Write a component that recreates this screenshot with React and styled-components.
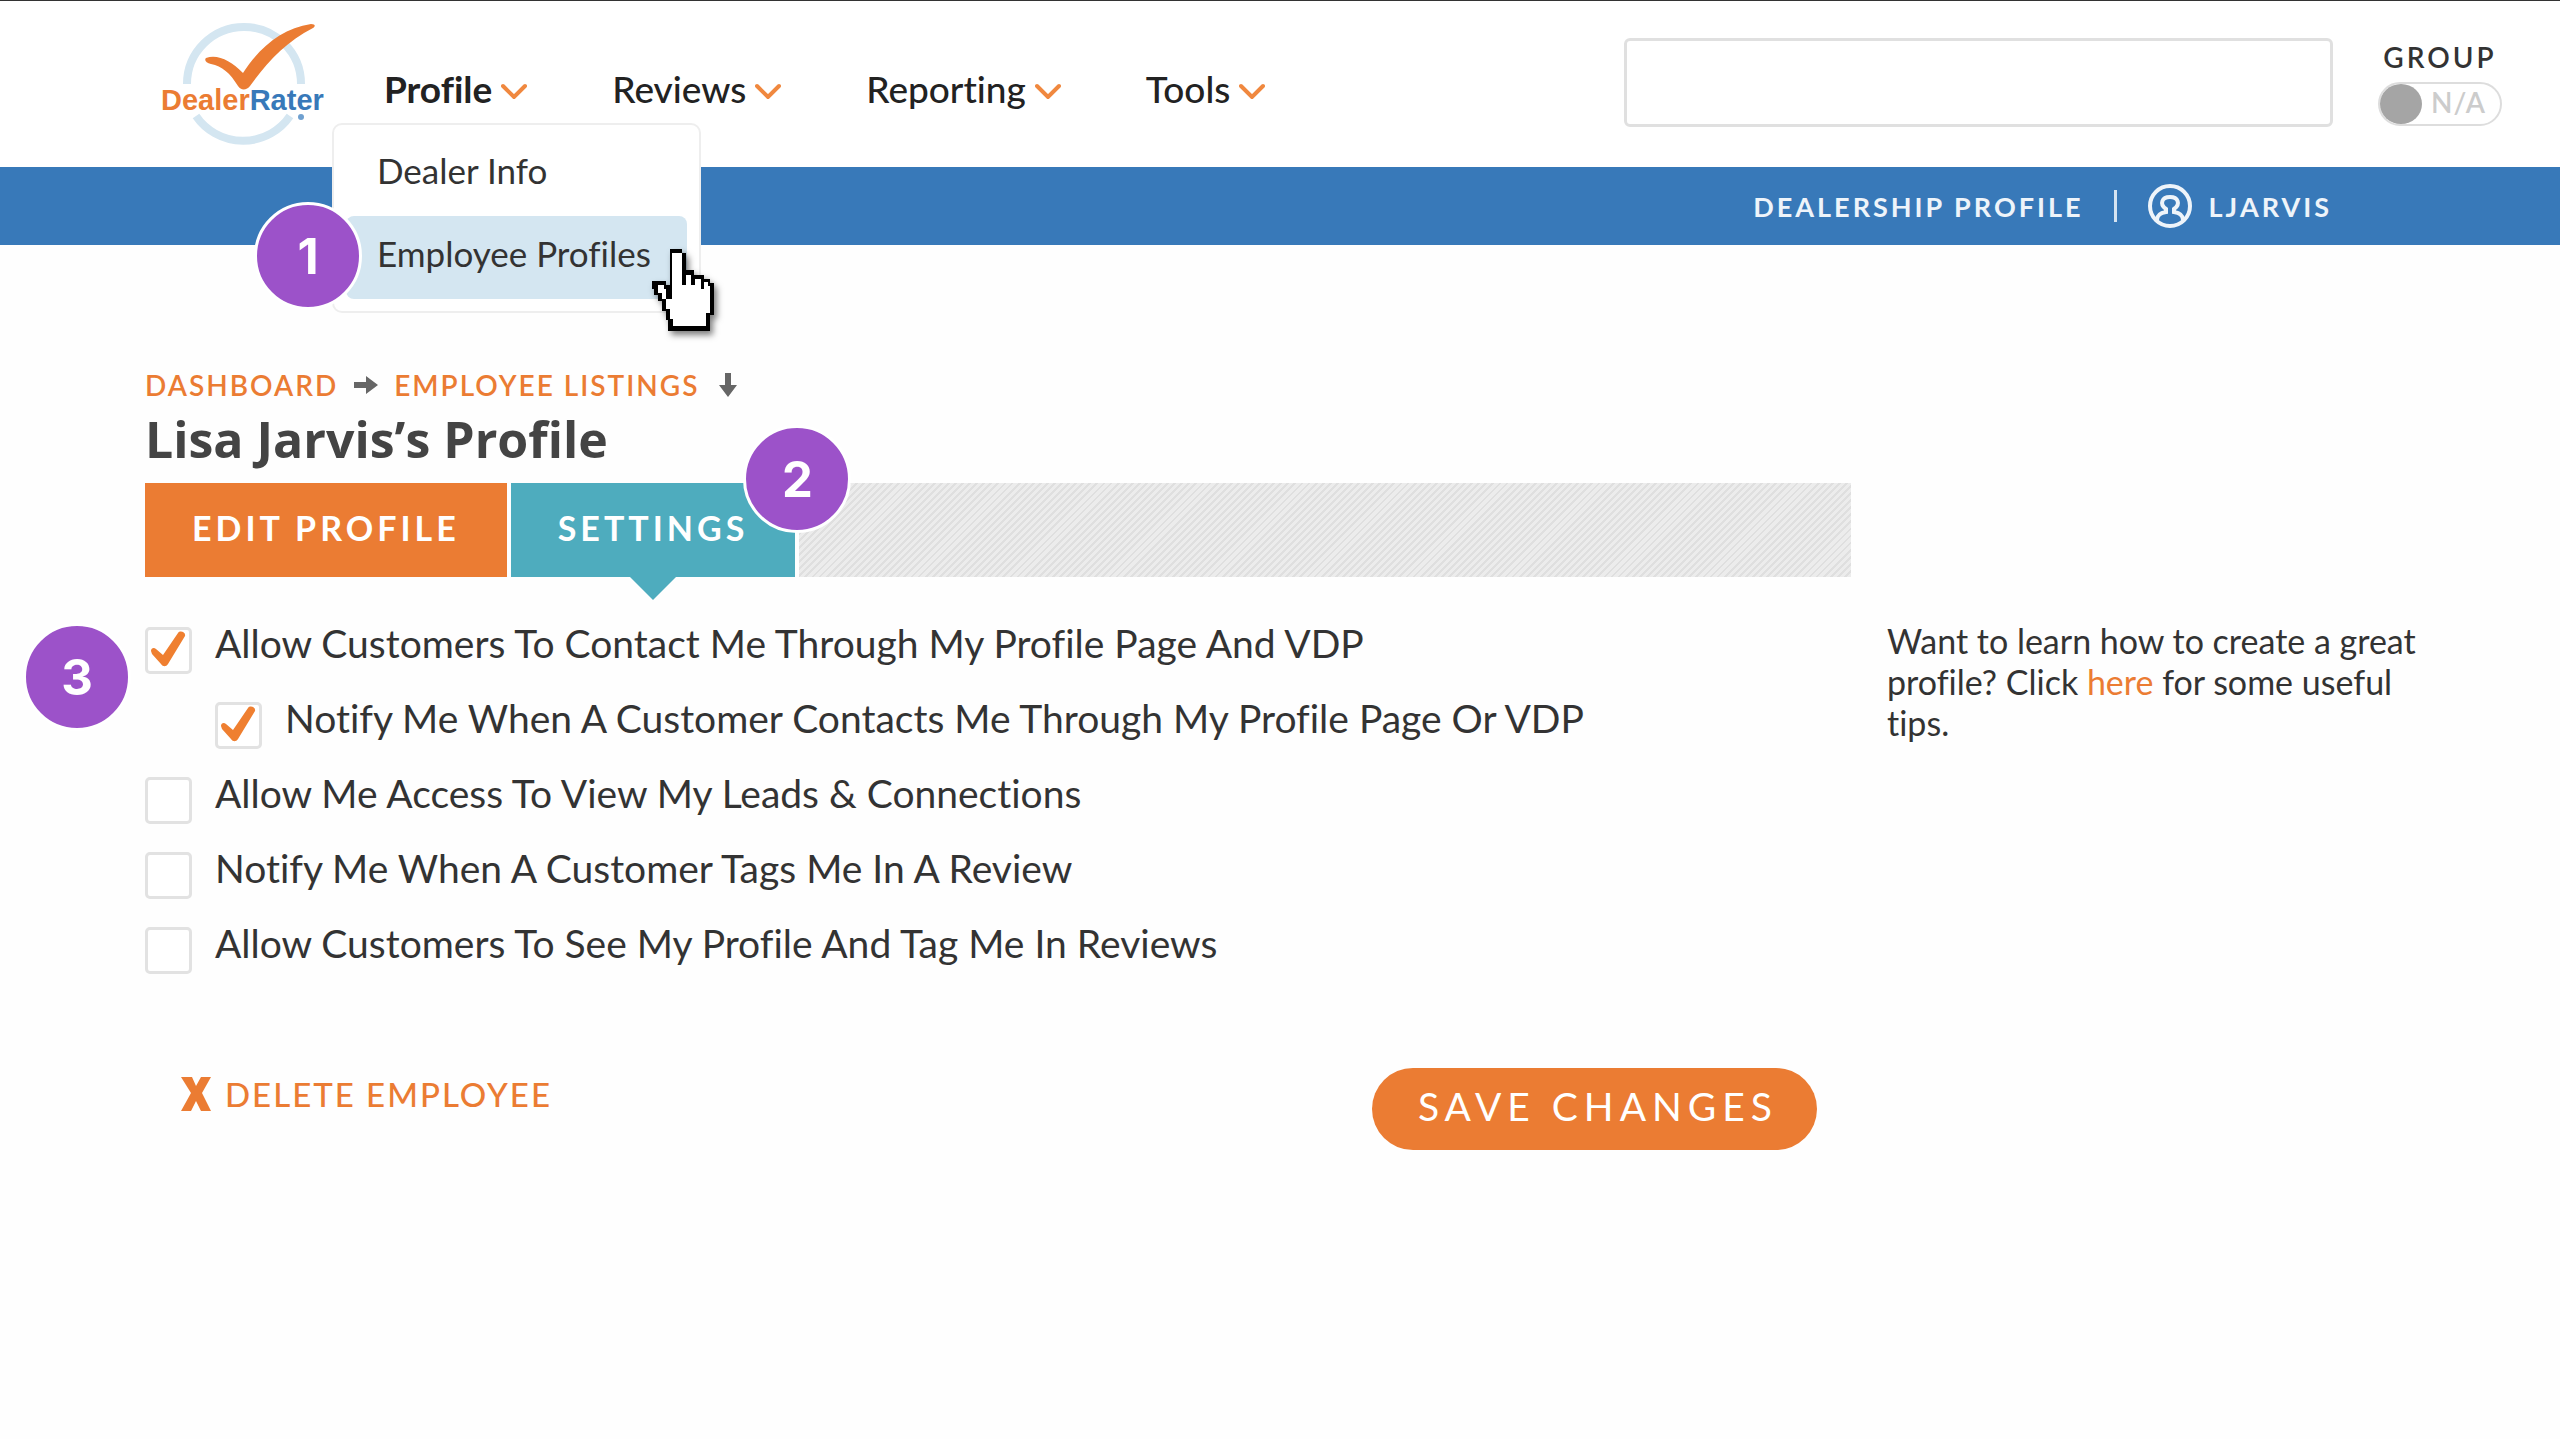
import React, { useState } from "react";
import styled, { createGlobalStyle } from "styled-components";

const GlobalStyle = createGlobalStyle`
  * {
    box-sizing: border-box;
  }

  body {
    margin: 0;
    background: #fefefe;
    color: #333;
    font-family: Lato, "Open Sans", sans-serif;
    font-variant-ligatures: none;
  }

  a {
    color: #eb7c33;
    text-decoration: none;
  }

  button, input {
    font: inherit;
  }
`;

const navItems = ["Profile", "Reviews", "Reporting", "Tools"];

const initialSettings = [
  { id: "contact", label: "Allow Customers To Contact Me Through My Profile Page And VDP", checked: true },
  { id: "notify-contact", label: "Notify Me When A Customer Contacts Me Through My Profile Page Or VDP", checked: true, nested: true },
  { id: "leads", label: "Allow Me Access To View My Leads & Connections", checked: false },
  { id: "notify-tag", label: "Notify Me When A Customer Tags Me In A Review", checked: false },
  { id: "visible", label: "Allow Customers To See My Profile And Tag Me In Reviews", checked: false },
];

const Logo = () => (
  <LogoLink href="#home" aria-label="DealerRater home">
    <svg width="166" height="126" viewBox="0 0 166 126">
      <g fill="none" stroke="#d4e6f1" strokeWidth="8">
        <path d="M27 62 A57 57 0 1 1 141 62" />
        <path d="M36 94 A57 57 0 0 0 130 94" />
      </g>
      <path
        fill="#eb7c33"
        d="M46 36 C58 32 71 39 83 51 C99 26 122 6 151 2 C155 2 156 4 153 6 C126 20 108 39 90 64 C87 68 81 69 78 64 C70 51 62 44 51 42 C46 41 44 38 46 36 Z"
      />
      <text x="1" y="88" fontFamily="Liberation Sans, Arial, sans-serif" fontWeight="700" fontSize="29">
        <tspan fill="#eb7c33">Dealer</tspan>
        <tspan fill="#3879b9">Rater</tspan>
      </text>
      <circle cx="141" cy="95" r="3" fill="#6fa0d0" />
    </svg>
  </LogoLink>
);

const Chevron = () => (
  <svg width="26" height="20" viewBox="0 0 26 20" fill="none" stroke="#f0883f" strokeWidth="4" aria-hidden="true">
    <path d="M2 7 L13 18 L24 7" strokeLinecap="round" />
  </svg>
);

const UserIcon = () => (
  <svg width="46" height="46" viewBox="0 0 46 46" fill="none" stroke="#eef4fa" aria-hidden="true">
    <circle cx="23" cy="23" r="20" strokeWidth="4" />
    <path
      d="M10 37 C10 32 13 30 19 29 V26 C12 21 15 14 23 14 C31 14 34 21 27 26 V29 C33 30 36 32 36 37"
      strokeWidth="4"
    />
  </svg>
);

const Arrow = ({ down }) => (
  <svg width="24" height="24" viewBox="0 0 24 24" aria-hidden="true">
    <path fill="#666" transform={down ? "rotate(90 12 12)" : undefined} d="M0 9 H12 V3 L24 12 L12 21 V15 H0 Z" />
  </svg>
);

const CheckMark = () => (
  <svg width="36" height="36" viewBox="0 0 36 36" aria-hidden="true">
    <path fill="#ef7f30" d="M1 20 C1 17 4 16 6 18 L13 24 L28 2 C30 -1 36 1 35 5 L18 33 C16 36 13 36 11 33 L2 23 Z" />
  </svg>
);

const HandCursor = () => (
  <Pointer width="64" height="86" viewBox="0 0 64 86" aria-hidden="true">
    <path
      fill="#000"
      d="M20 2 H32 V6 H36 V23 H44 V28 H54 V32 H60 V36 H64 V68 H60 V84 H18 V73 H16 V64 H12 V54 H8 V48 H4 V42 H2 V34 H16 V38 H20 Z"
    />
    <path
      fill="#fff"
      d="M22 6 H32 V38 H36 V28 H41 V38 H45 V32 H51 V42 H54 V35 H58 V39 H60 V66 H56 V79 H23 V72 H20 V62 H16 V52 H12 V46 H8 V38 H14 V42 H18 V52 H22 Z"
    />
    <path fill="#000" d="M16 38 H20 V52 H16 Z" />
  </Pointer>
);

const App = () => {
  const [settings, setSettings] = useState(initialSettings);

  const handleToggle = (id) => {
    setSettings(settings.map((item) => (
      item.id === id ? { ...item, checked: !item.checked } : item
    )));
  };

  return (
    <>
      <GlobalStyle />
      <Header>
        <Logo />
        <Nav>
          {navItems.map((item, index) => (
            <NavItem key={item}>
              <NavButton type="button" $active={index === 0}>
                {item}
                <Chevron />
              </NavButton>
              {index === 0 && (
                <Menu>
                  <MenuLink href="#dealer-info">Dealer Info</MenuLink>
                  <MenuLink href="#employee-profiles" $active>Employee Profiles</MenuLink>
                  <MenuStep>1</MenuStep>
                  <HandCursor />
                </Menu>
              )}
            </NavItem>
          ))}
        </Nav>
        <Search type="search" aria-label="Search" />
        <Group>
          <label htmlFor="group">GROUP</label>
          <Switch>
            <SwitchInput type="checkbox" id="group" />
            <SwitchText>N/A</SwitchText>
          </Switch>
        </Group>
      </Header>

      <AccountBar>
        <AccountLink href="#dealership">DEALERSHIP PROFILE</AccountLink>
        <Divider />
        <AccountLink href="#account">
          <UserIcon />
          LJARVIS
        </AccountLink>
      </AccountBar>

      <Main>
        <div>
          <Breadcrumb>
            <a href="#dashboard">DASHBOARD</a>
            <Arrow />
            <a href="#employees">EMPLOYEE LISTINGS</a>
            <Arrow down />
          </Breadcrumb>
          <Title>Lisa Jarvis’s Profile</Title>
          <Tabs>
            <Tab type="button">EDIT PROFILE</Tab>
            <Tab type="button" $active>
              SETTINGS
              <TabStep>2</TabStep>
            </Tab>
            <TabFill />
          </Tabs>

          <Form onSubmit={(e) => e.preventDefault()}>
            <FormStep>3</FormStep>
            {settings.map((item) => (
              <Option key={item.id} $nested={item.nested}>
                <Box>
                  <BoxInput
                    type="checkbox"
                    id={item.id}
                    checked={item.checked}
                    onChange={() => handleToggle(item.id)}
                  />
                  {item.checked && <CheckMark />}
                </Box>
                <OptionLabel htmlFor={item.id}>{item.label}</OptionLabel>
              </Option>
            ))}
            <Actions>
              <DeleteButton type="button">
                <svg width="30" height="34" viewBox="0 0 30 34" aria-hidden="true">
                  <path fill="#eb7c33" d="M0 0 H11 L15 9 L20 0 H30 L21 16 L30 34 H20 L15 24 L10 34 H0 L10 16 Z" />
                </svg>
                DELETE EMPLOYEE
              </DeleteButton>
              <SaveButton type="submit">SAVE CHANGES</SaveButton>
            </Actions>
          </Form>
        </div>
        <Aside>
          Want to learn how to create a great profile? Click <a href="#tips">here</a> for some useful tips.
        </Aside>
      </Main>
    </>
  );
};

export default App;


const Header = styled.header`
  display: flex;
  align-items: flex-start;
  height: 167px;
  padding: 0 58px 0 160px;
  border-top: 1px solid #333;
  background: #fff;
`;

const LogoLink = styled.a`
  flex: none;
  margin: 21px 58px 0 0;
`;

const Nav = styled.nav`
  display: flex;
  gap: 85px;
  margin-top: 66px;
`;

const NavItem = styled.div`
  position: relative;
`;

const NavButton = styled.button`
  display: flex;
  align-items: center;
  gap: 9px;
  padding: 0;
  border: none;
  background: none;
  color: #222;
  font-size: 37px;
  font-weight: ${(props) => (props.$active ? 700 : 500)};
  line-height: 44px;
  cursor: pointer;
`;

const Menu = styled.div`
  position: absolute;
  z-index: 2;
  top: 56px;
  left: -52px;
  width: 369px;
  padding: 8px 12px 12px;
  border: 2px solid #eee;
  border-radius: 10px;
  background: #fff;
`;

const MenuLink = styled.a`
  display: block;
  padding: 0 31px 8px;
  border-radius: 8px;
  background: ${(props) => (props.$active ? "#d4e6f1" : "none")};
  color: #333;
  font-size: 35px;
  line-height: 75px;
  white-space: nowrap;
`;

const Step = styled.span`
  position: absolute;
  display: flex;
  align-items: center;
  justify-content: center;
  width: 108px;
  height: 108px;
  border: 3px solid #fff;
  border-radius: 50%;
  background: #9c52c9;
  color: #fff;
  font-family: Inter, sans-serif;
  font-size: 49px;
  font-weight: 700;
  letter-spacing: 0;
`;

const MenuStep = styled(Step)`
  top: 77px;
  left: -80px;
`;

const TabStep = styled(Step)`
  z-index: 1;
  top: -58px;
  right: -56px;
`;

const FormStep = styled(Step)`
  top: 46px;
  left: -122px;
`;

const Pointer = styled.svg`
  position: absolute;
  top: 122px;
  right: -15px;
  filter: drop-shadow(3px 4px 3px rgba(0, 0, 0, 0.5));
`;

const Search = styled.input`
  flex: 0 1 709px;
  min-width: 0;
  height: 89px;
  margin: 37px 45px 0 auto;
  padding: 0 20px;
  border: 3px solid #e0e0e0;
  border-radius: 6px;
  background: #fff;
  font-size: 35px;
`;

const Group = styled.div`
  display: flex;
  flex: none;
  flex-direction: column;
  align-items: center;
  gap: 7px;
  margin-top: 38px;
  font-size: 28px;
  font-weight: 600;
  line-height: 36px;
  letter-spacing: 3px;
`;

const Switch = styled.div`
  position: relative;
  width: 124px;
  height: 44px;
`;

const SwitchInput = styled.input`
  appearance: none;
  width: 100%;
  height: 100%;
  margin: 0;
  border: 2px solid #ddd;
  border-radius: 22px;

  &::before {
    content: "";
    display: block;
    width: 42px;
    height: 40px;
    border-radius: 50%;
    background: #a5a5a5;
  }
`;

const SwitchText = styled.span`
  position: absolute;
  top: 2px;
  right: 16px;
  color: #ccc;
  letter-spacing: 1px;
  pointer-events: none;
`;

const AccountBar = styled.div`
  display: flex;
  align-items: center;
  justify-content: flex-end;
  gap: 30px;
  height: 78px;
  padding-right: 228px;
  background: #3879b9;
`;

const AccountLink = styled.a`
  display: flex;
  align-items: center;
  gap: 16px;
  color: #eef4fa;
  font-size: 27px;
  font-weight: 700;
  letter-spacing: 3px;
`;

const Divider = styled.span`
  width: 3px;
  height: 32px;
  background: #d5e3f1;
`;

const Main = styled.main`
  display: grid;
  grid-template-columns: 1706fr 540fr;
  gap: 36px;
  padding: 121px 133px 40px 145px;
`;

const Breadcrumb = styled.nav`
  display: flex;
  align-items: center;
  gap: 16px;
  font-size: 28px;
  font-weight: 600;
  line-height: 38px;
  letter-spacing: 2px;
`;

const Title = styled.h1`
  margin: 0 0 9px;
  color: #444;
  font-family: "Open Sans", sans-serif;
  font-size: 50px;
  font-weight: 700;
  line-height: 70px;
`;

const Tabs = styled.div`
  display: flex;
  gap: 4px;
  height: 94px;
`;

const Tab = styled.button`
  position: relative;
  padding: 0 47px 5px;
  border: none;
  background: ${(props) => (props.$active ? "#4eacbe" : "#eb7c33")};
  color: #fff;
  font-size: 34px;
  font-weight: 700;
  letter-spacing: 4px;
  cursor: pointer;

  &::after {
    content: "";
    display: ${(props) => (props.$active ? "block" : "none")};
    position: absolute;
    top: 100%;
    left: 50%;
    margin-left: -23px;
    border: 23px solid transparent;
    border-top-color: #4eacbe;
    border-bottom: none;
  }
`;

const TabFill = styled.div`
  flex: 1;
  background: repeating-linear-gradient(135deg, #dfdfdf 0 2px, #ececec 2px 5px);
`;

const Form = styled.form`
  position: relative;
  padding-top: 36px;
`;

const Option = styled.div`
  display: flex;
  align-items: flex-end;
  gap: 23px;
  height: 75px;
  margin-left: ${(props) => (props.$nested ? "70px" : "0")};
  padding-bottom: 14px;
`;

const Box = styled.div`
  position: relative;
  width: 47px;
  height: 47px;

  svg {
    position: absolute;
    top: 4px;
    left: 5px;
    pointer-events: none;
  }
`;

const BoxInput = styled.input`
  appearance: none;
  width: 100%;
  height: 100%;
  margin: 0;
  border: 3px solid #e2e2e2;
  border-radius: 5px;
  background: #fff;
`;

const OptionLabel = styled.label`
  font-size: 39px;
  line-height: 62px;
`;

const Actions = styled.div`
  display: flex;
  align-items: flex-start;
  justify-content: space-between;
  margin-top: 80px;
  padding: 0 34px 0 36px;
`;

const DeleteButton = styled.button`
  display: flex;
  align-items: center;
  gap: 14px;
  padding: 6px 0 0;
  border: none;
  background: none;
  color: #eb7c33;
  font-size: 33px;
  font-weight: 500;
  letter-spacing: 2px;
  cursor: pointer;
`;

const SaveButton = styled.button`
  height: 82px;
  padding: 0 39px 6px 46px;
  border: none;
  border-radius: 41px;
  background: #eb7c33;
  color: #fff;
  font-size: 39px;
  letter-spacing: 6px;
  cursor: pointer;
`;

const Aside = styled.aside`
  padding-top: 254px;
  font-size: 34px;
  line-height: 41px;
`;
